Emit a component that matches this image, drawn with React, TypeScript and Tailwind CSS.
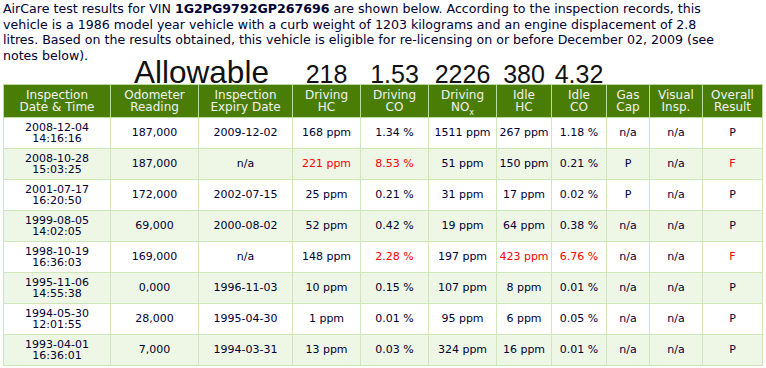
import React from "react"

type Cell = string | { v: string; red: true }

const widths = [107, 88, 94, 68, 68, 68, 55, 55, 43, 53, 60]

const rows: { date: string; time: string; cells: Cell[] }[] = [
  { date: "2008-12-04", time: "14:16:16", cells: ["187,000", "2009-12-02", "168 ppm", "1.34 %", "1511 ppm", "267 ppm", "1.18 %", "n/a", "n/a", "P"] },
  {
    date: "2008-10-28",
    time: "15:03:25",
    cells: ["187,000", "n/a", { v: "221 ppm", red: true }, { v: "8.53 %", red: true }, "51 ppm", "150 ppm", "0.21 %", "P", "n/a", { v: "F", red: true }],
  },
  { date: "2001-07-17", time: "16:20:50", cells: ["172,000", "2002-07-15", "25 ppm", "0.21 %", "31 ppm", "17 ppm", "0.02 %", "P", "n/a", "P"] },
  { date: "1999-08-05", time: "14:02:05", cells: ["69,000", "2000-08-02", "52 ppm", "0.42 %", "19 ppm", "64 ppm", "0.38 %", "n/a", "n/a", "P"] },
  {
    date: "1998-10-19",
    time: "16:36:03",
    cells: ["169,000", "n/a", "148 ppm", { v: "2.28 %", red: true }, "197 ppm", { v: "423 ppm", red: true }, { v: "6.76 %", red: true }, "n/a", "n/a", { v: "F", red: true }],
  },
  { date: "1995-11-06", time: "14:55:38", cells: ["0,000", "1996-11-03", "10 ppm", "0.15 %", "107 ppm", "8 ppm", "0.01 %", "n/a", "n/a", "P"] },
  { date: "1994-05-30", time: "12:01:55", cells: ["28,000", "1995-04-30", "1 ppm", "0.01 %", "95 ppm", "6 ppm", "0.05 %", "n/a", "n/a", "P"] },
  { date: "1993-04-01", time: "16:36:01", cells: ["7,000", "1994-03-31", "13 ppm", "0.03 %", "324 ppm", "16 ppm", "0.01 %", "n/a", "n/a", "P"] },
]

const headers: React.ReactNode[] = [
  <>Inspection<br />Date &amp; Time</>,
  <>Odometer<br />Reading</>,
  <>Inspection<br />Expiry Date</>,
  <>Driving<br />HC</>,
  <>Driving<br />CO</>,
  <>Driving<br />NO<sub className="text-[8px] align-[-2px]">x</sub></>,
  <>Idle<br />HC</>,
  <>Idle<br />CO</>,
  <>Gas<br />Cap</>,
  <>Visual<br />Insp.</>,
  <>Overall<br />Result</>,
]

export default function App() {
  return (
    <div className="w-[766px] h-[368px] overflow-hidden bg-white px-[3px] font-['DejaVu_Sans',Verdana,sans-serif] text-[#000033]">
      <p className="text-[12.6px] leading-[15.5px] pt-[1px] whitespace-nowrap">
        AirCare test results for VIN <b>1G2PG9792GP267696</b> are shown below. According to the inspection records, this
        <br />
        vehicle is a 1986 model year vehicle with a curb weight of 1203 kilograms and an engine displacement of 2.8
        <br />
        litres. Based on the results obtained, this vehicle is eligible for re-licensing on or before December 02, 2009 (see
        <br />
        notes below).
      </p>

      <table className="table-fixed border-collapse w-[760px] text-center">
        <colgroup>
          {widths.map((w, i) => (
            <col key={i} style={{ width: w }} />
          ))}
        </colgroup>
        <tbody>
          {/* allowable limits */}
          <tr className="font-['Liberation_Sans',Arial,sans-serif] text-[#111] leading-[19px]">
            <td className="h-[21px] p-0 align-baseline" />
            <td colSpan={2} className="p-0 align-baseline text-[31.5px]">Allowable</td>
            <td className="p-0 align-baseline text-[25px]">218</td>
            <td className="p-0 align-baseline text-[25px]">1.53</td>
            <td className="p-0 align-baseline text-[25px]">2226</td>
            <td className="p-0 align-baseline text-[25px]">380</td>
            <td className="p-0 align-baseline text-[25px]">4.32</td>
            <td className="p-0" colSpan={3} />
          </tr>

          <tr className="bg-[#4a7d06] text-[#f2f2f2] text-[12px] leading-[12.5px]">
            {headers.map((h, i) => (
              <td key={i} className="h-[33px] p-0 border border-[#b9dc9c] align-middle">
                {h}
              </td>
            ))}
          </tr>

          {rows.map((r, ri) => (
            <tr key={ri} className={ri % 2 === 1 ? "bg-[#eef6e6] text-[11px]" : "bg-white text-[11px]"}>
              <td className="h-[31px] p-0 border border-[#cde7ba] leading-[11.5px] align-middle">
                {r.date}
                <br />
                {r.time}
              </td>
              {r.cells.map((c, ci) => (
                <td
                  key={ci}
                  className={
                    typeof c === "string"
                      ? "p-0 border border-[#cde7ba] whitespace-nowrap align-middle"
                      : "p-0 border border-[#cde7ba] whitespace-nowrap align-middle text-[#ff0000]"
                  }
                >
                  {typeof c === "string" ? c : c.v}
                </td>
              ))}
            </tr>
          ))}
        </tbody>
      </table>
    </div>
  )
}
